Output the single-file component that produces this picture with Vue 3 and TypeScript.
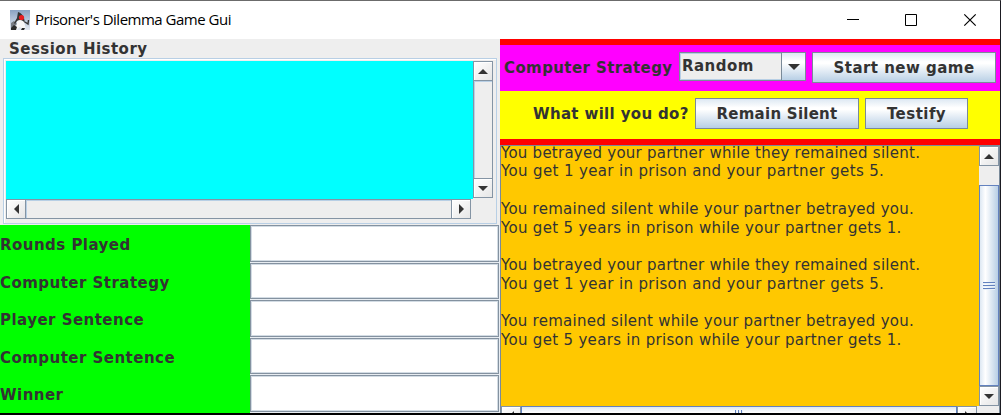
<script setup lang="ts">
interface Line { text: string; kind: string }
const stats: string[] = ['Rounds Played', 'Computer Strategy', 'Player Sentence', 'Computer Sentence', 'Winner']
const betrayed: Line[] = [
  { text: 'You betrayed your partner while they remained silent.', kind: 'plain' },
  { text: 'You get 1 year in prison and your partner gets 5.', kind: 'wide' },
]
const silent: Line[] = [
  { text: 'You remained silent while your partner betrayed you.', kind: 'plain' },
  { text: 'You get 5 years in prison while your partner gets 1.', kind: 'mid' },
]
const blank: Line = { text: '', kind: 'plain' }
const log: Line[] = [...betrayed, blank, ...silent, blank, ...betrayed, blank, ...silent]
</script>

<template>
  <div class="window">
    <header class="titlebar">
      <svg class="duke" width="20" height="20" viewBox="0 0 20 20">
        <defs>
          <linearGradient id="sky" x1="0" y1="0" x2="0" y2="1">
            <stop offset="0" stop-color="#8aa3c2" />
            <stop offset="1" stop-color="#e3e9f1" />
          </linearGradient>
        </defs>
        <rect width="20" height="20" fill="url(#sky)" />
        <path d="M1 13L4 11L7 14L3 18H1Z" fill="#777c84" />
        <path d="M7 9Q12 7 14 11L15.500 18L12 19L10 17L6 20L5 18Q8 14 7 9Z" fill="#f7f7f7" />
        <path d="M8 2Q12 3 14 8L15 13L13 11Q10 9 7 11L5 14L4 13L7 8Z" fill="#333" />
        <path d="M1 18L4 15L7 17L6 20H1ZM12 18L15 18L14 20H11Z" fill="#292929" />
        <path d="M15 12L18 14L18.500 10" fill="none" stroke="#333" stroke-width="1.4" />
        <circle cx="11.500" cy="7.500" r="2.600" fill="#e81e20" />
      </svg>
      <span class="caption">Prisoner's Dilemma Game Gui</span>
      <svg class="controls" width="130" height="14" viewBox="0 0 130 14">
        <g fill="none" stroke="#000" stroke-width="1">
          <path d="M0 6.500H12M58.500 1.500H69.500V12.500H58.500Z" />
          <path d="M117.300 1.300L128.700 12.700M128.700 1.300L117.300 12.700" stroke-width="1.200" />
        </g>
      </svg>
    </header>

    <main class="content">
      <section class="left">
        <div class="history">
          <div class="legend">Session History</div>
          <div class="etched">
            <div class="history-area"></div>
            <div class="vbar">
              <div class="sbtn"><svg width="10" height="5"><path d="M5 0L10 5H0Z" /></svg></div>
              <div class="track"></div>
              <div class="sbtn"><svg width="10" height="5"><path d="M0 0H10L5 5Z" /></svg></div>
            </div>
            <div class="hbar">
              <div class="sbtn"><svg width="5" height="10"><path d="M5 0V10L0 5Z" /></svg></div>
              <div class="track"></div>
              <div class="sbtn"><svg width="5" height="10"><path d="M0 0V10L5 5Z" /></svg></div>
            </div>
          </div>
        </div>
        <div class="stats">
          <div v-for="s in stats" :key="s" class="row">
            <div class="name">{{ s }}</div>
            <div class="cell"><div class="field"></div></div>
          </div>
        </div>
      </section>

      <section class="right">
        <div class="options">
          <div class="strategy">
            <span class="t-strategy">Computer Strategy</span>
            <div class="combo">
              <span class="value">Random</span>
              <span class="drop"><svg width="12" height="6"><path d="M0 0H12L6 6Z" /></svg></span>
            </div>
            <button class="btn start">Start new game</button>
          </div>
          <div class="choice">
            <span class="t-choice">What will you do?</span>
            <button class="btn remain">Remain Silent</button>
            <button class="btn testify">Testify</button>
          </div>
        </div>
        <div class="logpane">
          <div class="log"><div v-for="(l, i) in log" :key="i" class="line" :class="l.kind">{{ l.text }}</div></div>
          <div class="vbar">
            <div class="sbtn"><svg width="10" height="5"><path d="M5 0L10 5H0Z" /></svg></div>
            <div class="gap"></div>
            <div class="thumb"><i></i><i></i><i></i></div>
            <div class="sbtn"><svg width="10" height="5"><path d="M0 0H10L5 5Z" /></svg></div>
          </div>
          <div class="hbar">
            <div class="sbtn"><svg width="5" height="10"><path d="M5 0V10L0 5Z" /></svg></div>
            <div class="thumb"><i></i><i></i><i></i></div>
            <div class="sbtn"><svg width="5" height="10"><path d="M0 0V10L5 5Z" /></svg></div>
          </div>
        </div>
      </section>
    </main>
  </div>
</template>

<style>
body { overflow: hidden; }
</style>

<style scoped>
* { box-sizing: border-box; }
.window {
  width: 1001px; height: 415px; overflow: hidden; background: #fff;
  border-top: 1px solid #6b6b6b; border-right: 1px solid #1b1b22; border-bottom: 2px solid #000;
  font: bold 15px/19px "DejaVu Sans", sans-serif; letter-spacing: 0.47px; color: #333; white-space: nowrap;
}
svg { display: block; flex: none; }
.titlebar { height: 38px; display: flex; align-items: center; padding-left: 10px; }
.caption { width: 210px; margin: 0 auto 2px 5px; font: 15px/20px "Open Sans", "Noto Sans", sans-serif; letter-spacing: -0.5px; color: #000; }
.controls { margin-right: 23px; }
.content { display: flex; height: 374px; }
.left { width: 500px; background: #eee; }
.history { height: 186px; padding: 0 3px; }
.legend { height: 19px; padding-left: 6px; line-height: 21px; }
.etched {
  width: 494px; height: 166px; border: 1px solid #b8cfe5; padding: 2px; background: #eee;
  display: grid; grid-template-columns: 467px 20px; grid-template-rows: 138px 20px;
  box-shadow: inset 1px 1px #fff;
}
.history-area { background: #0ff; }
.sbtn {
  width: 20px; height: 20px; flex: none; display: flex; align-items: center; justify-content: center;
  background: linear-gradient(135deg, #fff, #e6e6e6); border: 1px solid #8494a4; box-shadow: inset 1px 1px #fff;
}
.sbtn path, .drop path { fill: #333; }
.vbar { display: flex; flex-direction: column; width: 20px; }
.hbar { display: flex; height: 20px; margin-right: 2px; }
.etched .vbar { height: 137px; }
.vbar .track { flex: 1; border: solid #8494a4; border-width: 0 1px; box-shadow: inset 1px 1px #b8cfe5; }
.hbar .track { flex: 1; border: solid #8494a4; border-width: 1px 0; box-shadow: inset 1px 1px #b8cfe5; }
.stats { height: 188px; background: #0f0; }
.row { display: flex; height: 37.5px; }
.name { width: 250px; line-height: 40px; }
.cell { width: 250px; padding: 0 1px 1px 0; background: #e8edf2; }
.field { height: 100%; background: #fff; border: 1px solid #8492a0; box-shadow: inset 1px 1px #d3dce4, inset -1px -1px #d3dce4; }
.right { width: 500px; }
.options { height: 106px; border: solid #f00; border-width: 6px 0; }
.strategy { height: 46px; background: #f0f; display: flex; padding: 7px 0 0 4px; }
.t-strategy { width: 175px; line-height: 32px; letter-spacing: 0.4px; }
.combo { width: 127px; height: 29px; display: flex; border: 1px solid #7a8a99; background: #eee; box-shadow: inset 1px 1px #b8cfe5, inset -1px -1px #b8cfe5; }
.value { flex: 1; padding-left: 2px; line-height: 27px; }
.drop { width: 24px; display: flex; align-items: center; justify-content: center; border-left: 1px solid #7a8a99; }
.drop, .btn { background: linear-gradient(#dde8f3 0%, #fff 30%, #fff 36%, #b8cfe5 100%); }
.btn { height: 31px; padding: 1px 0 0; border: 1px solid #7a8a99; border-radius: 0; font: inherit; letter-spacing: inherit; color: inherit; }
.start { width: 184px; margin-left: 6px; }
.choice { height: 48px; background: #ff0; display: flex; padding: 7px 0 0 33px; }
.t-choice { width: 162px; line-height: 33px; letter-spacing: 0.34px; }
.remain { width: 164px; letter-spacing: 0.26px; }
.testify { width: 103px; margin-left: 6px; }
.logpane {
  height: 268px; overflow: hidden; display: grid; grid-template-columns: 478px 20px; grid-template-rows: 260px 20px;
  border: solid #7a8a99; border-width: 1px 1px 0; background: #eee;
}
.log { background: #ffc800; overflow: hidden; font-weight: normal; }
.line { height: 18.75px; line-height: 18.75px; letter-spacing: 0.25px; }
.line:first-child { margin-top: -2.4px; }
.line.wide { letter-spacing: 0.36px; }
.line.mid { letter-spacing: 0.31px; }
.gap { height: 19px; }
.thumb {
  display: flex; flex: 1; align-items: center; justify-content: center; gap: 1px;
  border: 1px solid #6382bf; background: linear-gradient(90deg, #dde8f3, #fff 30%, #b8cfe5);
}
.vbar .thumb { flex-direction: column; }
.thumb i { width: 12px; height: 2px; background: #6382bf; border-bottom: 1px solid #e9f1fa; }
.hbar .thumb { background: linear-gradient(#dde8f3, #fff 30%, #b8cfe5); }
.hbar .thumb i { width: 2px; height: 12px; border: 0; border-right: 1px solid #e9f1fa; }
</style>
